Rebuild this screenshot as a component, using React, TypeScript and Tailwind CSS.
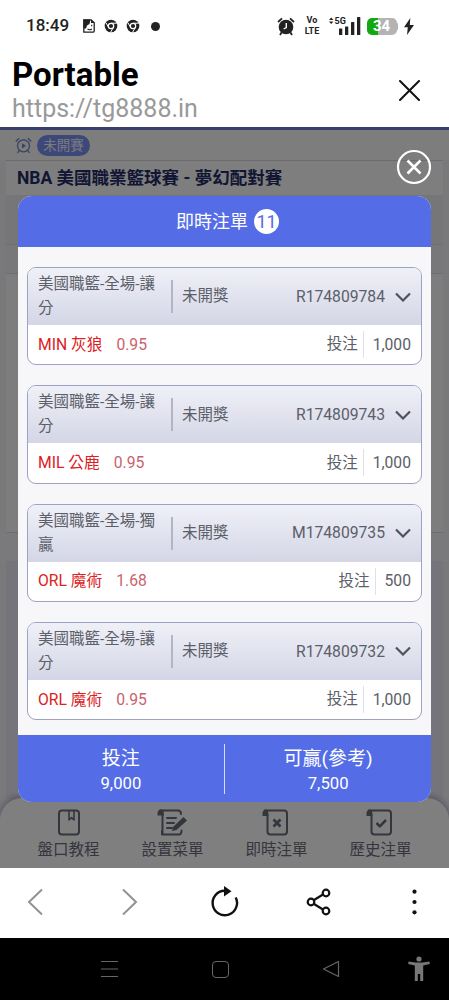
import type { ReactNode } from "react";

type Bet = {
  title: string;
  id: string;
  team: string;
  odds: string;
  stake: string;
};

const bets: Bet[] = [
  { title: "美國職籃-全場-讓分", id: "R174809784", team: "MIN 灰狼", odds: "0.95", stake: "1,000" },
  { title: "美國職籃-全場-讓分", id: "R174809743", team: "MIL 公鹿", odds: "0.95", stake: "1,000" },
  { title: "美國職籃-全場-獨贏", id: "M174809735", team: "ORL 魔術", odds: "1.68", stake: "500" },
  { title: "美國職籃-全場-讓分", id: "R174809732", team: "ORL 魔術", odds: "0.95", stake: "1,000" },
];

function ChromeIcon() {
  return (
    <svg className="h-[14px] w-[14px]" viewBox="0 0 14 14" fill="none">
      <circle cx="7" cy="7" r="6.3" fill="#222" />
      <circle cx="7" cy="7" r="2.7" fill="#222" stroke="#fff" strokeWidth="1.2" />
      <path d="M7 4.2h5.8M4.6 8.4L1.7 3.4M9.4 8.4l-2.9 5" stroke="#fff" strokeWidth="1" />
    </svg>
  );
}

function StatusBar() {
  return (
    <div className="flex h-[52px] items-center pl-[26px] pr-[35px] text-[#222]">
      <span className="w-[43px] whitespace-nowrap text-[17px] font-medium">18:49</span>
      <svg className="ml-[14px] h-[14px] w-[12px]" viewBox="0 0 12 14" fill="none">
        <path d="M.8.8H8l3.2 3V12a1.2 1.2 0 0 1-1.2 1.2H.8z" stroke="#222" strokeWidth="1.3" />
        <path d="M.5.5H7.5L6.5 5 4 6.5 3 9.5H.5zM8 .3L11.7 4H8z" fill="#222" />
        <path d="M4.5 10c1.5 1 3 .9 4.3 0M8.7 5.8v1.4" stroke="#222" strokeWidth="1.1" />
      </svg>
      <div className="ml-[9px] flex items-center gap-2">
        <ChromeIcon />
        <ChromeIcon />
      </div>
      <span className="ml-[11px] h-[9px] w-[9px] rounded-full bg-[#222]" />

      <svg className="ml-auto h-[19px] w-[18px]" viewBox="0 0 18 19" fill="none">
        <circle cx="9" cy="10" r="7.3" fill="#222" />
        <path d="M1 5l4-3.6M17 5l-4-3.6M4.5 15.5L3 18M13.5 15.5L15 18" stroke="#222" strokeWidth="1.8" />
        <path d="M9.3 6v4.6L6.6 12" stroke="#fff" strokeWidth="1.4" />
      </svg>
      <div className="ml-[9px] w-[17px] whitespace-nowrap text-center text-[9px] font-bold leading-[11px]">
        <div>Vo</div>
        <div>LTE</div>
      </div>
      <div className="relative ml-[8px] h-[18px] w-[32px]">
        <svg className="h-[18px] w-[32px]" viewBox="0 0 32 18" fill="#222">
          <path d="M0 3l2.2-2.6L4.4 3zM0 4.4h4.4L2.2 7z" />
          <rect x="10" y="11.5" width="3.3" height="6.5" rx=".6" />
          <rect x="16" y="9.5" width="3.3" height="8.5" rx=".6" />
          <rect x="22" y="5" width="3.3" height="13" rx=".6" />
          <rect x="28" y="0" width="3.3" height="18" rx=".6" />
        </svg>
        <span className="absolute left-[6px] top-0 text-[9px] font-bold leading-[8px]">5G</span>
      </div>
      <div className="ml-[6px] flex h-[17px] w-[30px] items-center justify-center rounded-[5px] bg-[linear-gradient(90deg,#13a812_36%,#b4b4b4_36%)] text-[15px] font-bold text-white">
        34
      </div>
      <span className="h-[7px] w-[1.5px] rounded-r bg-[#b4b4b4]" />
      <svg className="ml-[6px] h-[17px] w-[10px]" viewBox="0 0 10 17" fill="#222">
        <path d="M6.3 0L0 9.2h3.8L3 17l7-10H5.8z" />
      </svg>
    </div>
  );
}

function TabItem({ label, children }: { label: string; children: ReactNode }) {
  return (
    <div className="flex w-[104px] flex-col items-center">
      <svg className="h-[28px] w-[32px]" viewBox="0 0 32 28" fill="none" stroke="#686c7c" strokeWidth="2" strokeLinecap="round" strokeLinejoin="round">
        {children}
      </svg>
      <span className="mt-[4px] text-[15.5px] leading-[18px] text-[#6a6d7a]">{label}</span>
    </div>
  );
}

function BetCard({ bet }: { bet: Bet }) {
  return (
    <div className="h-[98.3px] shrink-0 overflow-hidden rounded-[9px] border border-[#9ca2c4] bg-white text-[15.5px] text-[#5c5e69]">
      <div className="flex h-[57px] items-center bg-linear-to-b from-[#eff0f7] to-[#d4d6e6] px-[10px]">
        <div className="w-[120px] self-start pt-[4px] leading-[24px]">{bet.title}</div>
        <div className="ml-[13px] h-[33px] w-[2px] bg-[#b3b4c5]" />
        <span className="ml-[9px] pt-px">未開獎</span>
        <span className="ml-auto text-[15.7px]">{bet.id}</span>
        <svg className="ml-[10px] h-[10px] w-[16px]" viewBox="0 0 16 10" fill="none" stroke="#50525c" strokeWidth="2.2">
          <path d="M1 1.5L8 8.5l7-7" />
        </svg>
      </div>
      <div className="flex h-[39px] items-center px-[10px]">
        <span className="text-[15.7px] text-[#dc2023]">{bet.team}</span>
        <span className="ml-[14px] text-[15.7px] text-[#c9636c]">{bet.odds}</span>
        <span className="ml-auto pt-px">投注</span>
        <span className="ml-[5px] h-[27px] w-px bg-[#dfe0e8]" />
        <span className="ml-[9px] text-[15.7px]">{bet.stake}</span>
      </div>
    </div>
  );
}

export default function App() {
  return (
    <div className="flex h-[1000px] w-[449px] flex-col overflow-hidden bg-white font-['Roboto','Noto_Sans_CJK_TC',sans-serif]">
      <StatusBar />

      {/* In-app browser header */}
      <div className="flex h-[78px] items-start justify-between border-b-[3px] border-[#36406a] pl-[12px] pr-[29px]">
        <div>
          <div className="mt-[5px] text-[33px] font-bold leading-[36px] text-black">Portable</div>
          <div className="mt-[1px] text-[25px] leading-[30px] text-[#999]">https://tg8888.in</div>
        </div>
        <svg className="mt-[28px] h-[21px] w-[21px]" viewBox="0 0 21 21" stroke="#111" strokeWidth="2" strokeLinecap="round">
          <path d="M1 1l19 19M20 1L1 20" />
        </svg>
      </div>

      <div className="relative flex h-[738px] flex-col overflow-hidden bg-[#f3f3f7]">
        {/* Match list behind the dialog */}
        <div className="flex h-[30px] items-center bg-[#fbfbfb] pl-[15px]">
          <svg className="h-[17px] w-[17px]" viewBox="0 0 17 17" fill="none" stroke="#7184c4" strokeWidth="1.3">
            <circle cx="8.5" cy="8.8" r="6" />
            <path d="M.8 4.5L4 1.2M16.2 4.5L13 1.2M4.3 13.3L2.5 16M12.7 13.3l1.8 2.7" />
            <path d="M7 6.2v5.2l4-2.6z" fill="#7184c4" stroke="none" />
          </svg>
          <span className="ml-[5px] h-[21px] w-[53px] rounded-full bg-[#7890f0] text-center text-[13.5px] leading-[20px] text-[#f4f4ff]">未開賽</span>
        </div>
        <div className="mx-[6px] h-[35px] border-t border-[#d8d8e0] bg-[#fcfcfc] pl-[11px] text-[17.5px] font-bold leading-[35px] text-[#242c66]">
          NBA 美國職業籃球賽 - 夢幻配對賽
        </div>
        <div className="mx-[6px] h-[50px] border-b border-[#dcdce4] bg-[#ededf3]" />
        <div className="mx-[6px] h-[29px] border-b border-[#dcdce4] bg-[#f1f1f6]" />
        <div className="mx-[6px] h-[259px] border-b border-[#dcdce4] bg-[#fafafa]" />
        <div className="h-[28px] bg-[#f4f4f8]" />
        <div className="mx-[6px] h-[238px] shrink-0 bg-[#e9e9f4]" />
        <div className="-mt-px flex h-[70px] shrink-0 justify-center rounded-t-[22px] bg-white pt-[11px] shadow-[0_-2px_7px_#a5a5bd]">
          <TabItem label="盤口教程">
            <rect x="6" y="1.5" width="20" height="24" rx="3" />
            <path d="M16 2v9l2.5-2.3L21 11V2" strokeWidth="1.6" />
          </TabItem>
          <TabItem label="設置菜單">
            <path d="M5.5 6V25H5v-3V25.5H22c2 0 2.5-1 2.5-4M3 1.5H21c2.5 0 3 1 3 3.5M10 9h9M10 14h7M10 19h5" />
            <path d="M.5 6.5V4.5C.5 2 2 .5 4 .5c2 0 3 1.5 3 6z" fill="#686c7c" stroke="none" />
            <path d="M16 18L26.500 8l3.500 3.500L19.500 21l-4.500 1z" fill="#686c7c" stroke="none" />
          </TabItem>
          <TabItem label="即時注單">
            <path d="M6.5 6v16.5c0 2 1 3 3 3H23c2 0 3-1 3-3v-18c0-2-1-3-3-3H4" />
            <path d="M1.5 7V4.5C1.5 2 3 .5 5 .5c1.5 0 2.5 1.5 2.5 6.5z" fill="#686c7c" stroke="none" />
            <path d="M12.5 10.5l7 7M19.5 10.5l-7 7" strokeWidth="2.7" strokeLinecap="butt" />
          </TabItem>
          <TabItem label="歷史注單">
            <path d="M6.5 6v16.5c0 2 1 3 3 3H23c2 0 3-1 3-3v-18c0-2-1-3-3-3H4" />
            <path d="M1.5 7V4.5C1.5 2 3 .5 5 .5c1.5 0 2.5 1.5 2.5 6.5z" fill="#686c7c" stroke="none" />
            <path d="M11.5 14l3.3 3.3 6.200-6.300" strokeWidth="2.5" strokeLinecap="butt" />
          </TabItem>
        </div>

        <div className="absolute inset-0 bg-black/50" />

        <svg className="absolute left-[396px] top-[19px] h-[36px] w-[36px]" viewBox="0 0 36 36" fill="none" stroke="#fff">
          <circle cx="18" cy="18" r="16" strokeWidth="2.2" />
          <path d="M11.5 11.5l13 13M24.5 11.5l-13 13" strokeWidth="2.6" />
        </svg>

        {/* Live bets dialog */}
        <div className="absolute left-[18px] top-[66px] flex h-[606px] w-[413px] flex-col overflow-hidden rounded-[14px] bg-[#f7f7f9]">
          <div className="flex h-[51px] shrink-0 items-center justify-center bg-[#546de6] pl-[6px] text-[18px] text-white">
            <span>即時注單</span>
            <span className="ml-[6px] h-[25px] w-[25px] rounded-full bg-white text-center leading-[26px] text-[#546de6]">11</span>
          </div>
          <div className="flex min-h-0 flex-1 flex-col gap-5 px-[9px] pt-5">
            {bets.map((bet) => (
              <BetCard key={bet.id} bet={bet} />
            ))}
          </div>
          <div className="flex h-[67px] shrink-0 items-center bg-[#546de6] text-center text-white">
            <div className="flex-1 pt-[4px]">
              <div className="text-[19px] leading-[26px]">投注</div>
              <div className="text-[16.7px] leading-[24px]">9,000</div>
            </div>
            <div className="h-[50px] w-[1.5px] bg-[#d5dcff]" />
            <div className="flex-1 pt-[4px]">
              <div className="text-[19px] leading-[26px]">可贏(參考)</div>
              <div className="text-[16.7px] leading-[24px]">7,500</div>
            </div>
          </div>
        </div>
      </div>

      {/* Browser toolbar */}
      <div className="flex h-[70px] items-center bg-white pb-[2px] pl-[27px] pr-[32px]">
        <svg className="h-[28px] w-[17px]" viewBox="0 0 17 28" fill="none" stroke="#929292" strokeWidth="2">
          <path d="M15 1.5L2 14l13 12.5" />
        </svg>
        <svg className="ml-[77px] h-[28px] w-[17px]" viewBox="0 0 17 28" fill="none" stroke="#929292" strokeWidth="2">
          <path d="M2 1.5L15 14 2 26.5" />
        </svg>
        <svg className="ml-[72px] h-[32px] w-[30px]" viewBox="0 0 30 32" fill="none">
          <path d="M25.7 11.5A12.2 12.2 0 1 1 14.5 4.8" stroke="#111" strokeWidth="2.4" />
          <path d="M14 0v10.5l7.5-5.2z" fill="#111" />
        </svg>
        <svg className="ml-[66px] h-[28px] w-[26px]" viewBox="0 0 26 28" fill="none" stroke="#111" strokeWidth="2.2">
          <path d="M8 12l9-5.5M8 16l9 5.5" />
          <circle cx="5" cy="14" r="3.3" />
          <circle cx="20" cy="5" r="3.3" />
          <circle cx="20" cy="23" r="3.3" />
        </svg>
        <svg className="ml-auto h-[26px] w-[5px]" viewBox="0 0 5 26" fill="#111">
          <circle cx="2.5" cy="2.7" r="2.1" />
          <circle cx="2.5" cy="13" r="2.1" />
          <circle cx="2.5" cy="23.3" r="2.1" />
        </svg>
      </div>

      {/* System navigation */}
      <div className="flex h-[62px] items-center bg-black pl-[100px] pr-[19px]">
        <svg className="h-[18px] w-[19px]" viewBox="0 0 19 18" stroke="#666" strokeWidth="1.2">
          <path d="M1 1.5h17M1 9h17M1 16.5h17" />
        </svg>
        <span className="ml-[93px] h-[17px] w-[17px] rounded-[4px] border border-[#666]" />
        <svg className="ml-[93px] h-[18px] w-[18px]" viewBox="0 0 18 18" fill="none" stroke="#666" strokeWidth="1.2" strokeLinejoin="round">
          <path d="M16.5 1.5v15L1.5 9z" />
        </svg>
        <svg className="ml-auto h-[26px] w-[22px]" viewBox="0 0 22 26" fill="#777">
          <circle cx="11" cy="3" r="2.6" />
          <path d="M.5 5.5l7 1h7l7-1 .3 2.5-6.6 1.5V25h-3v-7h-2.400v7h-3V9.500L.2 8z" />
        </svg>
      </div>
    </div>
  );
}
